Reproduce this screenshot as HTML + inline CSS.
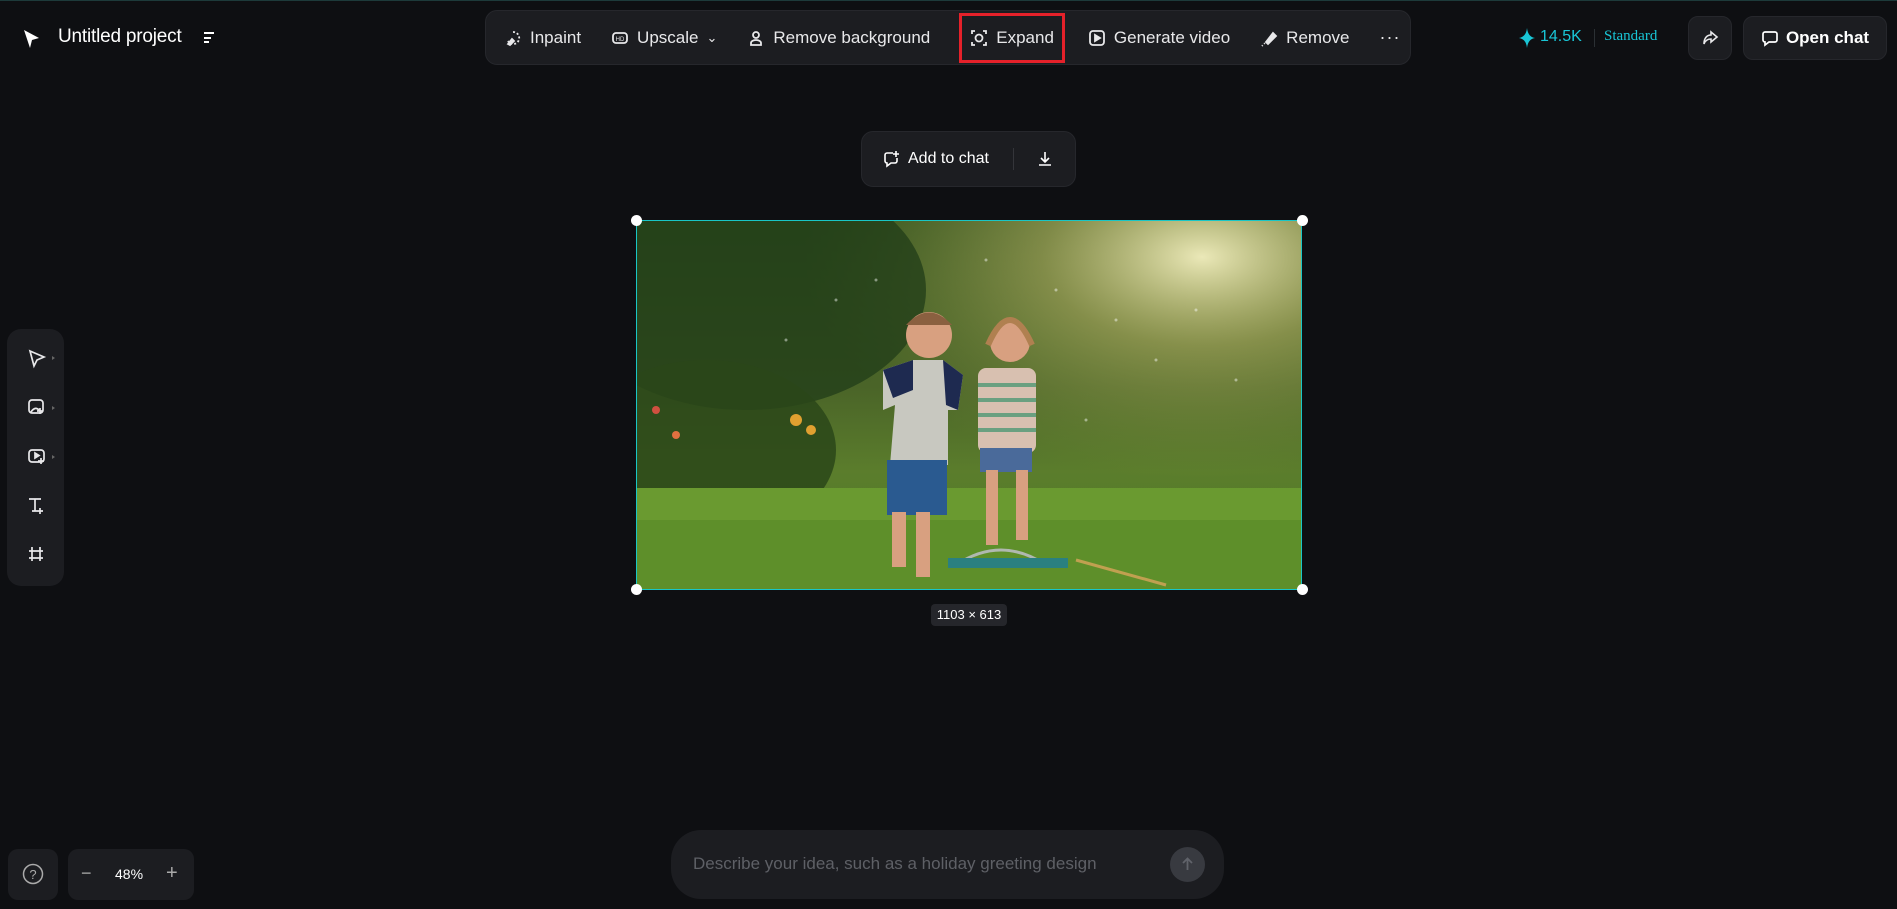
<!DOCTYPE html>
<html><head><meta charset="utf-8"><style>
*{margin:0;padding:0;box-sizing:border-box}
body{width:1897px;height:909px;background:#0e0f12;font-family:"Liberation Sans",sans-serif;color:#e8e8ea;position:relative;overflow:hidden}
.abs{position:absolute}
.panel{background:#1c1d21;border-radius:12px;position:absolute}
.tb{left:485px;top:10px;width:926px;height:55px;border:1px solid #26272c;display:flex;align-items:center;padding-left:18px;font-size:17px}
.tb .it{display:flex;align-items:center;gap:8px;margin-right:30px;white-space:nowrap}
.tb svg{width:18px;height:18px;stroke:#e8e8ea;fill:none;stroke-width:1.8}
</style></head><body>
<div class="abs" style="left:0;top:0;width:1897px;height:1px;background:#1d3a3a"></div>
<svg class="abs" style="left:22px;top:29px" width="18" height="20" viewBox="0 0 18 20"><path d="M2 1 L17 9 L10 11 L8 19 Z" fill="#fff"/></svg>
<div class="abs" style="left:58px;top:26px;font-size:19px;color:#fff;letter-spacing:-0.2px">Untitled project</div>
<svg class="abs" style="left:202px;top:30px" width="14" height="14"><path d="M2 3h10M2 8h7M2 12h5" stroke="#fff" stroke-width="2"/></svg>

<div class="panel tb">
<div class="it"><svg viewBox="0 0 18 18"><path d="M9 3a6 6 0 1 1-5 9" stroke-dasharray="2 2"/><path d="M4 15l4-5 2 2-4 4z" fill="#e8e8ea"/></svg>Inpaint</div>
<div class="it"><svg viewBox="0 0 18 18"><rect x="2" y="4" width="14" height="10" rx="3"/><text x="9" y="12" font-size="6" fill="#e8e8ea" stroke="none" text-anchor="middle">HD</text></svg>Upscale <span style="font-size:13px">&#8964;</span></div>
<div class="it"><svg viewBox="0 0 18 18"><circle cx="9" cy="6" r="3"/><path d="M4 16v-2a5 3 0 0 1 10 0v2z"/></svg>Remove background</div>
<div class="it" style="margin-left:10px;margin-right:34px"><svg viewBox="0 0 18 18"><circle cx="9" cy="9" r="3.5"/><path d="M2 5V2h3M13 2h3v3M16 13v3h-3M5 16H2v-3"/></svg>Expand</div>
<div class="it"><svg viewBox="0 0 18 18"><rect x="2" y="2" width="14" height="14" rx="3"/><path d="M7 6v6l5-3z" fill="#e8e8ea"/></svg>Generate video</div>
<div class="it"><svg viewBox="0 0 18 18"><path d="M6 13l7-9 3 3-8 8z" fill="#e8e8ea"/><path d="M2 17l3-3" stroke-dasharray="1 2"/></svg>Remove</div>
<div class="it" style="font-size:18px;letter-spacing:1px">···</div>
</div>
<div class="abs" style="left:959px;top:13px;width:106px;height:50px;border:3px solid #e5212a"></div>

<svg class="abs" style="left:1519px;top:28px" width="16" height="20" viewBox="0 0 16 20"><path d="M8 0 Q9 9 16 10 Q9 11 8 20 Q7 11 0 10 Q7 9 8 0Z" fill="#19c6d6"/></svg>
<div class="abs" style="left:1540px;top:28px;font-size:16px;color:#19c6d6">14.5K</div>
<div class="abs" style="left:1594px;top:29px;width:1px;height:18px;background:#2b3034"></div>
<div class="abs" style="left:1604px;top:28px;font-size:15px;color:#19c6d6;font-family:'Liberation Serif',serif">Standard</div>
<div class="panel" style="left:1688px;top:16px;width:44px;height:44px;border:1px solid #26272c;border-radius:10px"><svg style="margin:12px" width="18" height="18" viewBox="0 0 18 18"><path d="M10 3l6 5-6 5v-3C6 10 4 12 3 15 3 9 6 6 10 6z" fill="none" stroke="#e8e8ea" stroke-width="1.6"/></svg></div>
<div class="panel" style="left:1743px;top:16px;width:144px;height:44px;border:1px solid #26272c;border-radius:10px;display:flex;align-items:center;justify-content:center;gap:7px;font-weight:bold;font-size:17px;color:#fff"><svg width="18" height="18" viewBox="0 0 18 18"><path d="M4 3h10a2 2 0 0 1 2 2v6a2 2 0 0 1-2 2H8l-4 3v-3a2 2 0 0 1-2-2V5a2 2 0 0 1 2-2z" fill="none" stroke="#fff" stroke-width="1.7"/></svg>Open chat</div>

<div class="panel" style="left:861px;top:131px;width:215px;height:56px;border:1px solid #26272c;display:flex;align-items:center;font-size:16px;color:#fff">
<svg style="margin-left:20px;margin-right:8px" width="18" height="18" viewBox="0 0 18 18"><path d="M11 3H5a2 2 0 0 0-2 2v6a2 2 0 0 0 2 2v3l4-3h4a2 2 0 0 0 2-2V8M14 1v6M11 4h6" fill="none" stroke="#fff" stroke-width="1.6"/></svg>Add to chat
<div style="width:1px;height:22px;background:#34353a;margin-left:24px"></div>
<svg style="margin-left:22px" width="18" height="18" viewBox="0 0 18 18"><path d="M9 2v10M5 8l4 4 4-4M3 15h12" fill="none" stroke="#fff" stroke-width="1.6"/></svg>
</div>

<svg class="abs" style="left:636px;top:220px" width="666" height="370" viewBox="0 0 666 370">
<defs>
<linearGradient id="bg" x1="0" y1="0" x2="0" y2="1"><stop offset="0" stop-color="#34521e"/><stop offset=".45" stop-color="#4a6428"/><stop offset=".68" stop-color="#5b7d2c"/><stop offset="1" stop-color="#4a7a22"/></linearGradient>
<radialGradient id="sun" cx=".85" cy=".1" r=".6"><stop offset="0" stop-color="#f4f0c0" stop-opacity=".95"/><stop offset=".4" stop-color="#c8c070" stop-opacity=".5"/><stop offset="1" stop-color="#8a9a40" stop-opacity="0"/></radialGradient>
</defs>
<rect width="666" height="370" fill="url(#bg)"/>
<rect width="666" height="370" fill="url(#sun)"/>
<ellipse cx="110" cy="70" rx="180" ry="120" fill="#203c18" opacity=".75"/>
<ellipse cx="70" cy="230" rx="130" ry="90" fill="#2a4619" opacity=".85"/>
<rect x="0" y="268" width="666" height="102" fill="#6a9a30"/>
<rect x="0" y="300" width="666" height="70" fill="#5a8a28" opacity=".7"/>
<circle cx="20" cy="190" r="4" fill="#d05040"/><circle cx="40" cy="215" r="4" fill="#e07040"/><circle cx="160" cy="200" r="6" fill="#e0a030"/><circle cx="175" cy="210" r="5" fill="#e0a030"/>
<circle cx="293" cy="115" r="23" fill="#d8a080"/><path d="M270 105q23-25 46 0" fill="#8a6040"/>
<path d="M247 150l30-10h30l20 15-5 35-10 0 0 55h-58l5-60-12 5z" fill="#c8c8c0"/>
<path d="M247 150l30-10 0 30-20 8z M307 140l20 15-5 35-12-5z" fill="#1e2a50"/>
<rect x="251" y="240" width="60" height="55" fill="#2a5a90"/>
<rect x="256" y="292" width="14" height="55" fill="#d8a080"/><rect x="280" y="292" width="14" height="65" fill="#d8a080"/>
<circle cx="374" cy="122" r="20" fill="#d8a080"/><path d="M352 125q22-50 44 0" fill="none" stroke="#b08050" stroke-width="6"/>
<rect x="342" y="148" width="58" height="85" rx="8" fill="#d8c0b0"/>
<path d="M342 165h58M342 180h58M342 195h58M342 210h58" stroke="#6aa080" stroke-width="4"/>
<rect x="344" y="228" width="52" height="24" fill="#4a6a9a"/>
<rect x="350" y="250" width="12" height="75" fill="#d8a080"/><rect x="380" y="250" width="12" height="70" fill="#d8a080"/>
<path d="M320 345q45-30 90 0" stroke="#b0b8b0" stroke-width="3" fill="none"/>
<rect x="312" y="338" width="120" height="10" fill="#2a8080"/><path d="M440 340l90 25" stroke="#c0a050" stroke-width="3"/>
<g fill="#fff" opacity=".45"><circle cx="200" cy="80" r="1.5"/><circle cx="240" cy="60" r="1.5"/><circle cx="420" cy="70" r="1.5"/><circle cx="480" cy="100" r="1.5"/><circle cx="520" cy="140" r="1.5"/><circle cx="560" cy="90" r="1.5"/><circle cx="600" cy="160" r="1.5"/><circle cx="450" cy="200" r="1.5"/><circle cx="150" cy="120" r="1.5"/><circle cx="350" cy="40" r="1.5"/></g>
</svg>
<div class="abs" style="left:636px;top:220px;width:666px;height:370px;border:1px solid #19c6c6"></div>
<div class="abs" style="left:631px;top:215px;width:11px;height:11px;border-radius:50%;background:#fff"></div>
<div class="abs" style="left:1297px;top:215px;width:11px;height:11px;border-radius:50%;background:#fff"></div>
<div class="abs" style="left:631px;top:584px;width:11px;height:11px;border-radius:50%;background:#fff"></div>
<div class="abs" style="left:1297px;top:584px;width:11px;height:11px;border-radius:50%;background:#fff"></div>
<div class="abs" style="left:931px;top:604px;width:76px;height:22px;background:#25262b;border-radius:4px;font-size:13px;color:#fff;text-align:center;line-height:22px">1103 × 613</div>

<div class="panel" style="left:7px;top:329px;width:57px;height:257px;border-radius:14px">
<svg class="abs" style="left:20px;top:19px" width="30" height="220" viewBox="0 0 30 220" fill="none" stroke="#e8e8ea" stroke-width="1.7">
<path d="M3 3l14 6-7 3-3 6z"/><path d="M25 8l3 2-3 2z" fill="#666" stroke="none"/>
<rect x="2" y="52" width="14" height="13" rx="3"/><path d="M4 64q4-6 8-2M13 60v6M10 63h6"/><path d="M25 58l3 2-3 2z" fill="#666" stroke="none"/>
<rect x="2" y="102" width="15" height="12" rx="3"/><path d="M8 105v5l4-2.5z" fill="#e8e8ea"/><path d="M14 110v6M11 113h6"/><path d="M25 107l3 2-3 2z" fill="#666" stroke="none"/>
<path d="M2 151h12M8 151v12M5 163h6M13 160v6M10 163h6"/>
<path d="M5 199v14M13 199v14M2 203h14M2 210h14"/>
</svg></div>

<div class="panel" style="left:8px;top:849px;width:50px;height:51px;border-radius:10px"><svg style="margin:14px" width="22" height="22" viewBox="0 0 22 22"><circle cx="11" cy="11" r="9.5" fill="none" stroke="#aaa" stroke-width="1.5"/><text x="11" y="16" font-size="13" fill="#aaa" text-anchor="middle" font-family="Liberation Sans">?</text></svg></div>
<div class="panel" style="left:68px;top:849px;width:126px;height:51px;border-radius:10px;font-size:14px;color:#fff">
<span class="abs" style="left:13px;top:14px;font-size:18px;color:#aaa">−</span>
<span class="abs" style="left:47px;top:17px">48%</span>
<span class="abs" style="left:98px;top:13px;font-size:20px;color:#aaa">+</span></div>

<div class="panel" style="left:671px;top:830px;width:553px;height:69px;border-radius:30px;font-size:17px;color:#5e6066">
<span class="abs" style="left:22px;top:24px">Describe your idea, such as a holiday greeting design</span>
<div class="abs" style="left:499px;top:17px;width:35px;height:35px;border-radius:50%;background:#383a40"><svg style="margin:9px" width="17" height="17" viewBox="0 0 17 17"><path d="M8.5 14V3M4 7l4.5-4.5L13 7" fill="none" stroke="#60636a" stroke-width="1.8"/></svg></div>
</div>
</body></html>
